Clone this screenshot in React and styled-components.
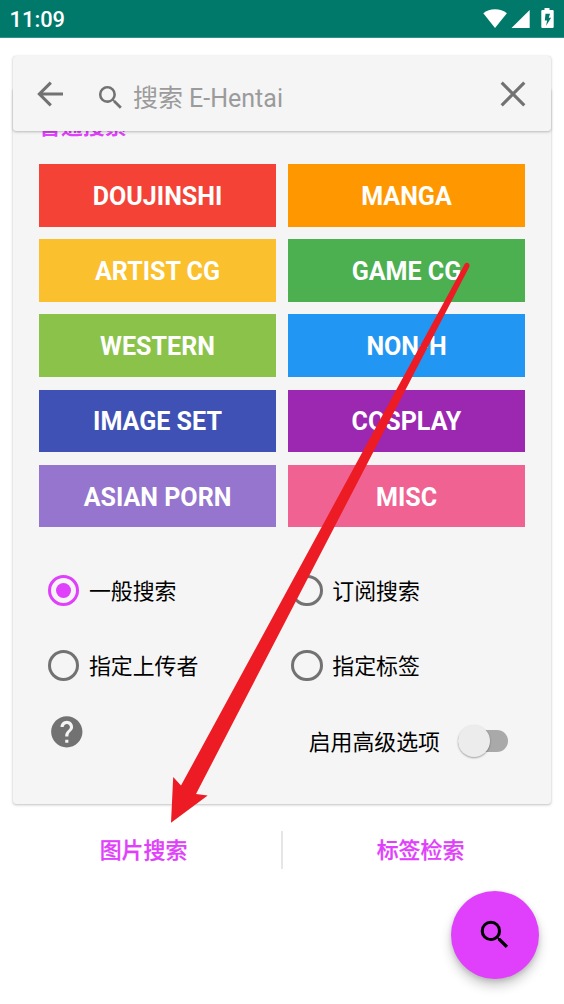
import styled, { createGlobalStyle } from "styled-components"

const GlobalStyle = createGlobalStyle`
  * {
    box-sizing: border-box;
  }
  body {
    margin: 0;
    background: #ffffff;
    font-family: Roboto, "Noto Sans CJK SC", sans-serif;
  }
`

const Screen = styled.div`
  position: relative;
  display: flex;
  flex-direction: column;
  width: 564px;
  height: 1004px;
  overflow: hidden;
  background: #ffffff;
`

const StatusBar = styled.header`
  display: flex;
  align-items: center;
  justify-content: space-between;
  flex: none;
  height: 38px;
  padding: 0 9px 0 9.5px;
  background: #00796b;
  border-bottom: 1px solid #2f9287;
`

const Clock = styled.span`
  color: #ffffff;
  font-size: 21.9px;
  font-weight: 500;
  line-height: 26px;
  padding-top: 2px;
`

const StatusIcons = styled.svg`
  width: 72px;
  height: 22px;
`

const SearchBar = styled.div`
  position: relative;
  z-index: 1;
  display: flex;
  align-items: center;
  flex: none;
  height: 75px;
  margin: 18px 13.5px 0 13px;
  padding: 0 22.5px 0 23px;
  background: #f5f5f5;
  border-radius: 3px;
  box-shadow: 0 1px 3px rgba(0, 0, 0, 0.24), 0 0 1px rgba(0, 0, 0, 0.14);
`

const BarIcon = styled.svg`
  flex: none;
  width: 30px;
  height: 30px;
`

const SearchGlyph = styled.svg`
  flex: none;
  width: ${(props) => props.size}px;
  height: ${(props) => props.size}px;
  fill: ${(props) => props.color};
`

const Hint = styled.div`
  flex: 1;
  display: flex;
  align-items: center;
  padding: 8px 0 0 29px;
  color: #9b9b9b;
  font-size: 25px;
  line-height: 30px;
  white-space: nowrap;
`

const HintText = styled.span`
  margin-left: 6.5px;
  padding-top: 2px;
`

const Panel = styled.section`
  flex: none;
  height: 716px;
  margin: -43px 13.5px 0 13px;
  padding: 22px 25px 0 26px;
  background: #f5f5f5;
  border-radius: 3px;
  box-shadow: 0 1px 3px rgba(0, 0, 0, 0.24), 0 0 1px rgba(0, 0, 0, 0.14);
`

const PanelTitle = styled.h2`
  margin: 0;
  height: 54px;
  color: #e040fb;
  font-size: 21.9px;
  font-weight: 700;
  line-height: 33px;
`

const Categories = styled.div`
  display: grid;
  grid-template-columns: 237px 237px;
  grid-auto-rows: 62.7px;
  gap: 12.5px 12px;
`

const Category = styled.button`
  border: 0;
  padding: 2px 0 0;
  background: ${(props) => props.color};
  color: #ffffff;
  font-family: inherit;
  font-size: 25.07px;
  font-weight: 700;
`

const Modes = styled.div`
  display: grid;
  grid-template-columns: 243.4px 243.4px;
  grid-auto-rows: 75.2px;
  margin-top: 25.5px;
`

const Mode = styled.label`
  display: flex;
  align-items: center;
  gap: 9.5px;
  padding-left: 9px;
  color: #000000;
  font-size: 21.9px;
`

const ModeText = styled.span`
  padding-bottom: 3px;
`

const Radio = styled.span`
  display: flex;
  align-items: center;
  justify-content: center;
  width: 31.4px;
  height: 31.4px;
  border: 3px solid ${(props) => (props.$checked ? "#e040fb" : "#727272")};
  border-radius: 50%;

  &::after {
    content: "";
    width: 15.6px;
    height: 15.6px;
    border-radius: 50%;
    background: ${(props) => (props.$checked ? "#e040fb" : "transparent")};
  }
`

const Options = styled.div`
  display: flex;
  justify-content: space-between;
  height: 75px;
  padding: 10px 17.5px 0 9px;
`

const HelpIcon = styled.svg`
  width: 37.6px;
  height: 37.6px;
  fill: #727272;
`

const Advanced = styled.label`
  display: flex;
  align-items: center;
  height: 55px;
  gap: 18px;
  color: #000000;
  font-size: 21.9px;
`

const Track = styled.span`
  display: flex;
  align-items: center;
  width: 50px;
  height: 22px;
  border-radius: 11px;
  background: #a9a9a9;
`

const Thumb = styled.span`
  flex: none;
  width: 32px;
  height: 32px;
  border-radius: 50%;
  background: #ececec;
  box-shadow: 0 1px 2px rgba(0, 0, 0, 0.35);
`

const Links = styled.nav`
  display: flex;
  align-items: center;
  flex: none;
  height: 92px;
  padding: 0 6px;
`

const Link = styled.button`
  flex: 1;
  border: 0;
  padding: 0 0 4px;
  background: none;
  color: #e040fb;
  font-family: inherit;
  font-size: 21.9px;
  font-weight: 500;
  -webkit-text-stroke: 0.25px #e040fb;
`

const Divider = styled.span`
  width: 2px;
  height: 38px;
  background: #e6e6e6;
`

const Fab = styled.button`
  display: flex;
  align-items: center;
  justify-content: center;
  flex: none;
  align-self: flex-end;
  width: 88px;
  height: 88px;
  margin: -5px 25px 0 0;
  border: 0;
  padding: 0;
  border-radius: 50%;
  background: #e040fb;
  box-shadow: 0 7px 12px rgba(0, 0, 0, 0.2), 0 2px 5px rgba(0, 0, 0, 0.14);
`

// red pointer drawn over the whole screen
const Pointer = styled.svg`
  position: absolute;
  top: 0;
  left: 0;
  z-index: 2;
  width: 564px;
  height: 1004px;
  pointer-events: none;
`

const categories = [
  { name: "DOUJINSHI", color: "#f44336" },
  { name: "MANGA", color: "#ff9800" },
  { name: "ARTIST CG", color: "#fbc02d" },
  { name: "GAME CG", color: "#4caf50" },
  { name: "WESTERN", color: "#8bc34a" },
  { name: "NON-H", color: "#2196f3" },
  { name: "IMAGE SET", color: "#3f51b5" },
  { name: "COSPLAY", color: "#9c27b0" },
  { name: "ASIAN PORN", color: "#9575cd" },
  { name: "MISC", color: "#f06292" },
]

const modes = ["一般搜索", "订阅搜索", "指定上传者", "指定标签"]

const SearchIcon = ({ size, color }) => (
  <SearchGlyph viewBox="0 0 24 24" size={size} color={color}>
    <path d="M15.5 14h-.79l-.28-.27A6.47 6.47 0 0 0 16 9.5 6.5 6.5 0 1 0 9.5 16c1.61 0 3.09-.59 4.23-1.57l.27.28v.79l5 4.99L20.49 19l-4.99-5zm-6 0C7.01 14 5 11.99 5 9.5S7.01 5 9.5 5 14 7.01 14 9.5 11.99 14 9.5 14z" />
  </SearchGlyph>
)

const App = () => {
  return (
    <Screen>
      <GlobalStyle />
      <StatusBar>
        <Clock>11:09</Clock>
        <StatusIcons viewBox="0 0 72 22" fill="#fff">
          <path d="M0.3 5.2C3.5 2.6 7.5 1.2 12 1.2s8.700 1.400 11.900 4L12 20z" />
          <path d="M46.700 2v18H28.500z" />
          <path
            fillRule="evenodd"
            d="M61.500 0h5v2h3.300c.5 0 .9.400.9.900v16.200c0 .5-.4.900-.9.900h-10.600c-.5 0-.9-.4-.9-.9V2.900c0-.5.400-.9.900-.9h2.300zM62.500 5.700h4.500l-1.200 4h2.300l-5 8 1-5.300h-2.300z"
          />
        </StatusIcons>
      </StatusBar>

      <SearchBar>
        <BarIcon viewBox="0 0 30 30" fill="none" stroke="#727272" strokeWidth="3.1">
          <path d="M27 15H3.500M14.800 3.600L3.400 15l11.400 11.400" />
        </BarIcon>
        <Hint>
          <SearchIcon size={31.4} color="#727272" />
          <HintText>搜索 E-Hentai</HintText>
        </Hint>
        <BarIcon viewBox="0 0 30 30" fill="none" stroke="#727272" strokeWidth="3.1">
          <path d="M3.700 3.700l22.600 22.600M26.300 3.700L3.700 26.300" />
        </BarIcon>
      </SearchBar>

      <Panel>
        <PanelTitle>普通搜索</PanelTitle>
        <Categories>
          {categories.map((item) => (
            <Category key={item.name} color={item.color}>
              {item.name}
            </Category>
          ))}
        </Categories>
        <Modes>
          {modes.map((mode, i) => (
            <Mode key={mode}>
              <Radio $checked={i === 0} />
              <ModeText>{mode}</ModeText>
            </Mode>
          ))}
        </Modes>
        <Options>
          <HelpIcon viewBox="0 0 24 24">
            <path d="M12 2C6.480 2 2 6.480 2 12s4.480 10 10 10 10-4.480 10-10S17.520 2 12 2zm1 17h-2v-2h2v2zm2.070-7.750l-.9.920C13.450 12.900 13 13.500 13 15h-2v-.5c0-1.100.450-2.100 1.170-2.830l1.240-1.260c.370-.360.590-.860.590-1.410 0-1.100-.9-2-2-2s-2 .9-2 2H8c0-2.210 1.790-4 4-4s4 1.790 4 4c0 .880-.360 1.680-.930 2.250z" />
          </HelpIcon>
          <Advanced>
            启用高级选项
            <Track>
              <Thumb />
            </Track>
          </Advanced>
        </Options>
      </Panel>

      <Links>
        <Link>图片搜索</Link>
        <Divider />
        <Link>标签检索</Link>
      </Links>

      <Fab>
        <SearchIcon size={37.6} color="#000" />
      </Fab>

      <Pointer viewBox="0 0 564 1004">
        <path
          fill="#ed1c24"
          d="M464.600 264.200Q466.200 262 468.400 263.200Q470.200 264.600 469.200 267L196 794L207.700 795.600L171 822.700L173.200 777L181 785.600z"
        />
      </Pointer>
    </Screen>
  )
}

export default App
